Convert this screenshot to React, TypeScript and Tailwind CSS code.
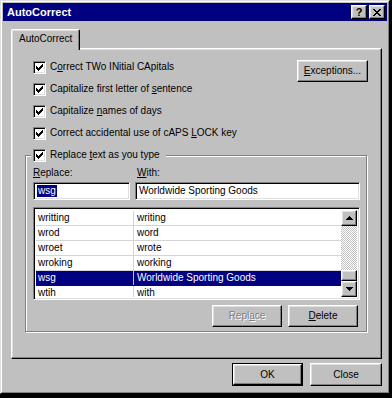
import React from "react";

const raised =
  "border border-t-white border-l-white border-r-black border-b-black shadow-[inset_-1px_-1px_0_#808080,inset_1px_1px_0_#dfdfdf]";
const sunken =
  "border border-t-[#808080] border-l-[#808080] border-r-white border-b-white shadow-[inset_1px_1px_0_#000,inset_-1px_-1px_0_#dfdfdf]";

function CheckMark() {
  const px: [number, number, number][] = [
    [6, 0, 1],
    [5, 1, 2],
    [0, 2, 1],
    [4, 2, 3],
    [0, 3, 2],
    [3, 3, 3],
    [0, 4, 5],
    [1, 5, 3],
    [2, 6, 1],
  ];
  return (
    <svg width="7" height="7" viewBox="0 0 7 7" shapeRendering="crispEdges">
      {px.map(([x, y, w], i) => (
        <rect key={i} x={x} y={y} width={w} height={1} fill="#000" />
      ))}
    </svg>
  );
}

function Checkbox() {
  return (
    <div className={`w-[13px] h-[13px] bg-white shrink-0 flex items-center justify-center ${sunken}`}>
      <CheckMark />
    </div>
  );
}

function CheckRow({ children }: { children: React.ReactNode }) {
  return (
    <div className="h-[22px] flex items-center gap-[4px]">
      <Checkbox />
      <span className="leading-none whitespace-nowrap">{children}</span>
    </div>
  );
}

function Btn({
  children,
  className = "",
}: {
  children: React.ReactNode;
  className?: string;
}) {
  return (
    <div className={`flex items-center justify-center bg-[#c0c0c0] ${raised} ${className}`}>
      {children}
    </div>
  );
}

function Tri({ down = false }: { down?: boolean }) {
  return (
    <svg width="7" height="4" viewBox="0 0 7 4" shapeRendering="crispEdges">
      {down ? (
        <>
          <rect x="0" y="0" width="7" height="1" fill="#000" />
          <rect x="1" y="1" width="5" height="1" fill="#000" />
          <rect x="2" y="2" width="3" height="1" fill="#000" />
          <rect x="3" y="3" width="1" height="1" fill="#000" />
        </>
      ) : (
        <>
          <rect x="3" y="0" width="1" height="1" fill="#000" />
          <rect x="2" y="1" width="3" height="1" fill="#000" />
          <rect x="1" y="2" width="5" height="1" fill="#000" />
          <rect x="0" y="3" width="7" height="1" fill="#000" />
        </>
      )}
    </svg>
  );
}

const rows: [string, string][] = [
  ["writting", "writing"],
  ["wrod", "word"],
  ["wroet", "wrote"],
  ["wroking", "working"],
  ["wsg", "Worldwide Sporting Goods"],
  ["wtih", "with"],
];

export default function App() {
  return (
    <div className="w-[392px] h-[398px] bg-black font-['Liberation_Sans',Arial,sans-serif] text-[10px] text-black select-none">
      <div className="w-[390px] h-[394px] bg-[#c0c0c0] border border-t-[#dfdfdf] border-l-[#dfdfdf] border-r-black border-b-black">
        <div className="w-full h-full border border-t-white border-l-white border-r-[#808080] border-b-[#808080] p-px flex flex-col">
          {/* Title bar */}
          <div className="h-[18px] bg-[#000080] flex items-center pl-[4px] pr-[2px]">
            <span className="text-white font-bold text-[11px] leading-none flex-1">AutoCorrect</span>
            <Btn className="w-[16px] h-[14px]">
              <span className="font-bold text-[11px] leading-none mt-[1px]">?</span>
            </Btn>
            <Btn className="w-[16px] h-[14px] ml-[2px]">
              <svg width="8" height="7" viewBox="0 0 8 7" shapeRendering="crispEdges">
                {[0, 1, 2, 3, 4, 5, 6].map((i) => (
                  <React.Fragment key={i}>
                    <rect x={i} y={i} width="2" height="1" fill="#000" />
                    <rect x={6 - i} y={i} width="2" height="1" fill="#000" />
                  </React.Fragment>
                ))}
              </svg>
            </Btn>
          </div>

          {/* Tabs */}
          <div className="ml-[8px] mr-[5px] mt-[8px] flex flex-col">
            <div className="flex">
              <div className="relative z-10 -mb-[2px] h-[21px] px-[7px] pb-[2px] bg-[#c0c0c0] border border-b-0 border-t-white border-l-white border-r-black rounded-t-[2px] shadow-[inset_-1px_0_0_#808080,inset_1px_1px_0_#dfdfdf] flex items-center">
                <span className="leading-none">AutoCorrect</span>
              </div>
            </div>
            <div className={`h-[311px] bg-[#c0c0c0] flex flex-col ${raised}`}>
              <div className="pt-[7px] pl-[21px] pr-[13px] flex justify-between">
                <div className="flex flex-col">
                  <CheckRow>
                    C<u>o</u>rrect TWo INitial CApitals
                  </CheckRow>
                  <CheckRow>
                    Capitalize first letter of <u>s</u>entence
                  </CheckRow>
                  <CheckRow>
                    Capitalize <u>n</u>ames of days
                  </CheckRow>
                  <CheckRow>
                    Correct accidental use of cAPS <u>L</u>OCK key
                  </CheckRow>
                </div>
                <Btn className="w-[71px] h-[22px] mt-[4px]">
                  <span className="leading-none">
                    <u>E</u>xceptions...
                  </span>
                </Btn>
              </div>

              {/* Group box */}
              <div className="mt-[11px] ml-[13px] mr-[14px] border border-[#808080] shadow-[1px_1px_0_#fff,inset_1px_1px_0_#fff] pl-[7px] pr-[6px] pb-[4px] flex flex-col">
                <div className="-mt-[8px] -ml-[2px] pl-[2px] pr-[6px] h-[14px] w-fit bg-[#c0c0c0] flex items-center gap-[4px]">
                  <Checkbox />
                  <span className="leading-none whitespace-nowrap">
                    Replace <u>t</u>ext as you type
                  </span>
                </div>

                <div className="mt-[4px] h-[14px] flex items-center gap-[5px]">
                  <span className="w-[97px] leading-none">
                    <u>R</u>eplace:
                  </span>
                  <span className="pl-[2px] leading-none">
                    <u>W</u>ith:
                  </span>
                </div>

                <div className="mt-[2px] flex gap-[5px]">
                  <div className={`w-[97px] h-[18px] bg-white flex items-center pl-[3px] ${sunken}`}>
                    <span className="bg-[#000080] text-white leading-[12px] px-px">wsg</span>
                  </div>
                  <div className={`flex-1 h-[18px] bg-white flex items-center pl-[3px] ${sunken}`}>
                    <span className="leading-none">Worldwide Sporting Goods</span>
                  </div>
                </div>

                {/* List */}
                <div className={`mt-[7px] h-[93px] bg-white p-[2px] flex ${sunken}`}>
                  <div className="flex-1 flex flex-col overflow-hidden pt-px">
                    {rows.map(([a, b], i) => {
                      const sel = a === "wsg";
                      return (
                        <div
                          key={i}
                          className={`h-[15px] shrink-0 flex border-b ${
                            sel ? "bg-[#000080] text-white border-[#000080]" : "border-[#d4d4d4]"
                          }`}
                        >
                          <div
                            className={`w-[98px] shrink-0 pl-[2px] flex items-center border-r ${
                              sel ? "border-[#c0c0c0]" : "border-[#d4d4d4]"
                            }`}
                          >
                            <span className="leading-none">{a}</span>
                          </div>
                          <div className="flex-1 pl-[3px] flex items-center">
                            <span className="leading-none whitespace-nowrap">{b}</span>
                          </div>
                        </div>
                      );
                    })}
                  </div>
                  {/* scrollbar */}
                  <div className="w-[16px] flex flex-col bg-[repeating-conic-gradient(#c0c0c0_0%_25%,#ffffff_0%_50%)] bg-size-[2px_2px]">
                    <Btn className="w-[16px] h-[16px] shrink-0">
                      <Tri />
                    </Btn>
                    <div className="flex-1" />
                    <Btn className="w-[16px] h-[11px] shrink-0" >
                      <span />
                    </Btn>
                    <Btn className="w-[16px] h-[16px] shrink-0">
                      <Tri down />
                    </Btn>
                  </div>
                </div>

                <div className="mt-[5px] mr-[2px] flex justify-end gap-[6px]">
                  <Btn className="w-[70px] h-[22px]">
                    <span className="leading-none text-[#808080] [text-shadow:1px_1px_0_#fff]">
                      Repl<u>a</u>ce
                    </span>
                  </Btn>
                  <Btn className="w-[70px] h-[22px]">
                    <span className="leading-none">
                      <u>D</u>elete
                    </span>
                  </Btn>
                </div>
              </div>
            </div>

            {/* Bottom buttons */}
            <div className="mt-[4px] flex justify-end gap-[7px]">
              <div className="w-[71px] h-[23px] border border-black">
                <Btn className="w-full h-full">
                  <span className="leading-none">OK</span>
                </Btn>
              </div>
              <Btn className="w-[72px] h-[23px]">
                <span className="leading-none">Close</span>
              </Btn>
            </div>
          </div>
        </div>
      </div>
    </div>
  );
}
